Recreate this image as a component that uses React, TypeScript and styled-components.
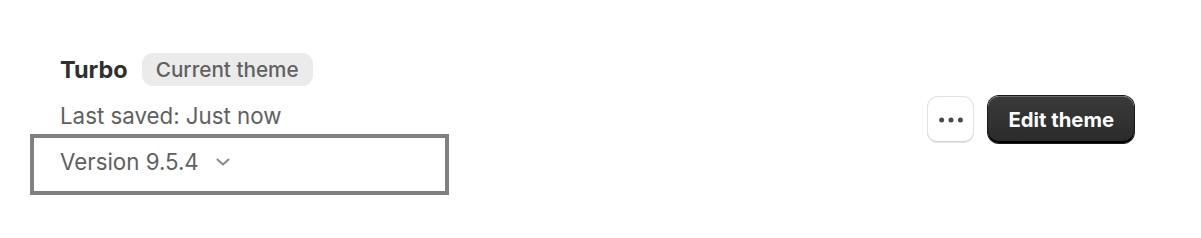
import React from 'react';
import styled, { createGlobalStyle } from 'styled-components';

const GlobalStyle = createGlobalStyle`
  html, body {
    margin: 0;
    padding: 0;
    background: #ffffff;
    font-family: Inter, 'Noto Sans', sans-serif;
    -webkit-font-smoothing: antialiased;
  }
`;

const ThemeCard = styled.section`
  display: flex;
  align-items: flex-start;
  justify-content: space-between;
  padding: 53px 67px 0 60px;
`;

const Info = styled.div`
  display: flex;
  flex-direction: column;
`;

const TitleRow = styled.div`
  display: flex;
  align-items: center;
  gap: 14px;
  height: 33px;
`;

const ThemeName = styled.h2`
  margin: 0;
  font-size: 23.5px;
  font-weight: 680;
  color: #303030;
`;

const Badge = styled.span`
  display: inline-flex;
  align-items: center;
  height: 33px;
  padding: 0 14px;
  border-radius: 11px;
  background: #ebebeb;
  color: #616161;
  font-size: 20.7px;
  font-weight: 550;
`;

const Meta = styled.p`
  margin: 15px 0 0;
  font-size: 22.3px;
  line-height: 30px;
  color: #616161;
`;

const VersionButton = styled.button`
  display: flex;
  align-items: center;
  gap: 17px;
  width: 419px;
  height: 61px;
  margin: 3px 0 0 -30px;
  padding: 0 0 6px 26px;
  border: 4px solid #808080;
  background: #ffffff;
  font-family: inherit;
  font-size: 22.3px;
  color: #616161;
  cursor: pointer;
`;

const Actions = styled.div`
  display: flex;
  align-items: center;
  gap: 14px;
  margin-top: 43px;
`;

const IconButton = styled.button`
  display: flex;
  align-items: center;
  justify-content: center;
  width: 47px;
  height: 47px;
  border: none;
  border-radius: 11px;
  background: #ffffff;
  box-shadow: inset 0 0 0 1px #e3e3e3, inset 0 -2px 0 #d4d4d4;
  color: #4a4a4a;
  cursor: pointer;
`;

const PrimaryButton = styled.button`
  height: 47px;
  padding: 0 20px;
  border: none;
  border-radius: 11px;
  background: linear-gradient(180deg, #3a3a3a 0%, #2a2a2a 100%);
  box-shadow: inset 0 1px 0 rgba(255, 255, 255, 0.25), inset 0 -2px 0 #000000,
    0 0 0 1px #1a1a1a;
  color: #ffffff;
  font-family: inherit;
  font-size: 20.3px;
  font-weight: 650;
  cursor: pointer;
`;

const Dots = () => (
  <svg width="24" height="6" viewBox="0 0 24 6" fill="currentColor">
    <circle cx="2.6" cy="3" r="2.5" />
    <circle cx="12" cy="3" r="2.5" />
    <circle cx="21.4" cy="3" r="2.5" />
  </svg>
);

const Chevron = () => (
  <svg width="14" height="8" viewBox="0 0 14 8" fill="none">
    <path
      d="M1.5 1.5L7 6.5L12.5 1.5"
      stroke="#8a8a8a"
      strokeWidth="2"
      strokeLinecap="round"
      strokeLinejoin="round"
    />
  </svg>
);

export default function App() {
  return (
    <>
      <GlobalStyle />
      <ThemeCard>
        <Info>
          <TitleRow>
            <ThemeName>Turbo</ThemeName>
            <Badge>Current theme</Badge>
          </TitleRow>
          <Meta>Last saved: Just now</Meta>
          <VersionButton>
            Version 9.5.4
            <Chevron />
          </VersionButton>
        </Info>
        <Actions>
          <IconButton aria-label="More actions">
            <Dots />
          </IconButton>
          <PrimaryButton>Edit theme</PrimaryButton>
        </Actions>
      </ThemeCard>
    </>
  );
}
